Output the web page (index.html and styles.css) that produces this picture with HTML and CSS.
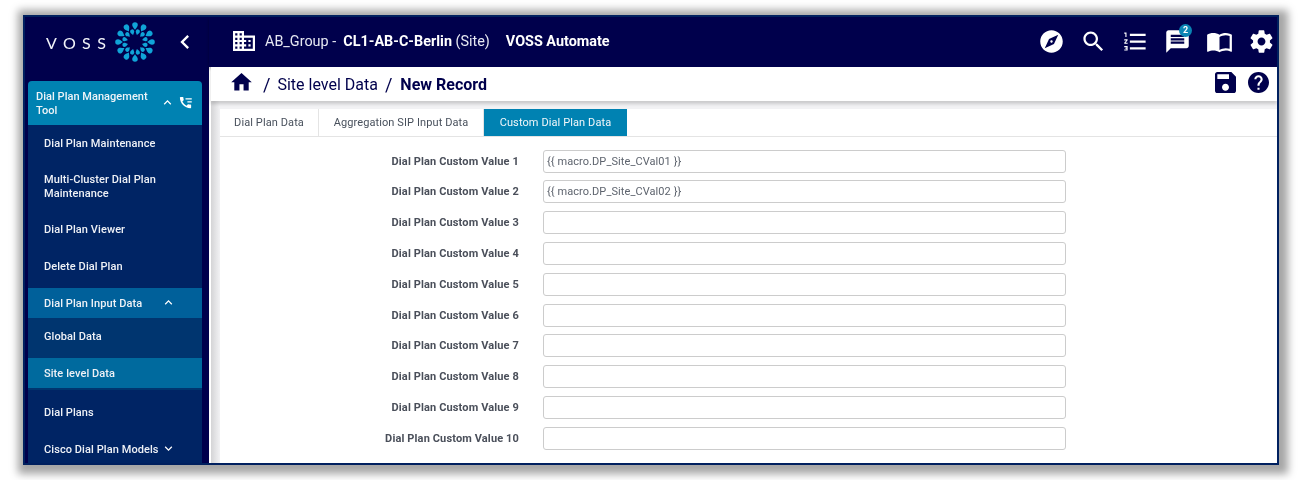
FILE: index.html
```html
<!DOCTYPE html>
<html lang="en">
<head>
<meta charset="utf-8">
<title>VOSS Automate</title>
<link rel="stylesheet" href="styles.css">
</head>
<body>
<svg class="defs" width="0" height="0" aria-hidden="true">
  <defs>
    <path id="drop" d="M0 3.6C1.4 1.6 2.8.3 2.8-1.2A2.8 2.8 0 0 0-2.8-1.2C-2.8.3-1.4 1.6 0 3.6Z"/>
  </defs>
</svg>
<div class="frame">
  <aside class="sidebar">
    <div class="brand">
      <span class="wordmark">VOSS</span>
      <svg class="logo" viewBox="-20 -20 40 40" aria-hidden="true">
        <g class="petals">
          <use href="#drop" transform="rotate(0) translate(0 -15.8)"/><use href="#drop" transform="rotate(30) translate(0 -15.8)"/><use href="#drop" transform="rotate(60) translate(0 -15.8)"/><use href="#drop" transform="rotate(90) translate(0 -15.8)"/><use href="#drop" transform="rotate(120) translate(0 -15.8)"/><use href="#drop" transform="rotate(150) translate(0 -15.8)"/><use href="#drop" transform="rotate(180) translate(0 -15.8)"/><use href="#drop" transform="rotate(210) translate(0 -15.8)"/><use href="#drop" transform="rotate(240) translate(0 -15.8)"/><use href="#drop" transform="rotate(270) translate(0 -15.8)"/><use href="#drop" transform="rotate(300) translate(0 -15.8)"/><use href="#drop" transform="rotate(330) translate(0 -15.8)"/>
          <use href="#drop" transform="rotate(15) translate(0 -10) scale(.75)"/><use href="#drop" transform="rotate(45) translate(0 -10) scale(.75)"/><use href="#drop" transform="rotate(75) translate(0 -10) scale(.75)"/><use href="#drop" transform="rotate(105) translate(0 -10) scale(.75)"/><use href="#drop" transform="rotate(135) translate(0 -10) scale(.75)"/><use href="#drop" transform="rotate(165) translate(0 -10) scale(.75)"/><use href="#drop" transform="rotate(195) translate(0 -10) scale(.75)"/><use href="#drop" transform="rotate(225) translate(0 -10) scale(.75)"/><use href="#drop" transform="rotate(255) translate(0 -10) scale(.75)"/><use href="#drop" transform="rotate(285) translate(0 -10) scale(.75)"/><use href="#drop" transform="rotate(315) translate(0 -10) scale(.75)"/><use href="#drop" transform="rotate(345) translate(0 -10) scale(.75)"/>
        </g>
      </svg>
      <svg class="collapse" viewBox="0 0 24 24" aria-hidden="true"><path d="M15.41 7.41L14 6l-6 6 6 6 1.41-1.41L10.83 12z"/></svg>
    </div>
    <nav class="menu">
      <div class="menu-head">
        <span class="menu-head-text">Dial Plan Management Tool</span>
        <svg class="chev" viewBox="0 0 24 24" aria-hidden="true"><path d="M12 8l-6 6 1.41 1.41L12 10.83l4.59 4.58L18 14z"/></svg>
        <svg class="phone" viewBox="0 0 24 24" aria-hidden="true"><path d="M20.01 15.38c-1.23 0-2.42-.2-3.53-.56-.35-.12-.74-.03-1.01.24l-1.57 1.97c-2.83-1.35-5.48-3.9-6.89-6.83l1.95-1.66c.27-.28.35-.67.24-1.02-.37-1.11-.56-2.3-.56-3.53 0-.54-.45-.99-.99-.99H4.19C3.65 3 3 3.24 3 3.99 3 13.28 10.73 21 20.01 21c.71 0 .99-.63.99-1.18v-3.45c0-.54-.45-.99-.99-.99z"/><path d="M12 5h10v2H12zM15 10h7v2h-7z"/></svg>
      </div>
      <a class="item h37">Dial Plan Maintenance</a>
      <a class="item h49">Multi-Cluster Dial Plan Maintenance</a>
      <a class="item h37">Dial Plan Viewer</a>
      <a class="item tail">Delete Dial Plan</a>
      <div class="group">
        <a class="item sub">Dial Plan Input Data<svg class="chev" viewBox="0 0 24 24" aria-hidden="true"><path d="M12 8l-6 6 1.41 1.41L12 10.83l4.59 4.58L18 14z"/></svg></a>
        <a class="item h40">Global Data</a>
        <a class="item sub current">Site level Data</a>
      </div>
      <a class="item h44">Dial Plans</a>
      <a class="item h32">Cisco Dial Plan Models<svg class="chev small" viewBox="0 0 24 24" aria-hidden="true"><path d="M16.59 8.59L12 13.17 7.41 8.59 6 10l6 6 6-6z"/></svg></a>
    </nav>
  </aside>
  <main class="main">
    <header class="topbar">
      <svg class="building" viewBox="2 3 20 18" aria-hidden="true"><path d="M12 7V3H2v18h20V7H12zM6 19H4v-2h2v2zm0-4H4v-2h2v2zm0-4H4V9h2v2zm0-4H4V5h2v2zm4 12H8v-2h2v2zm0-4H8v-2h2v2zm0-4H8V9h2v2zm0-4H8V5h2v2zm10 12h-8v-2h2v-2h-2v-2h2v-2h-2V9h8v10zm-2-8h-2v2h2v-2zm0 4h-2v2h2v-2z"/></svg>
      <span class="context">AB_Group -&nbsp; <b>CL1-AB-C-Berlin</b> (Site)</span>
      <strong class="product">VOSS Automate</strong>
      <div class="tools">
        <svg class="tool" viewBox="0 0 24 24" aria-hidden="true"><path d="M12 10.9c-.61 0-1.1.49-1.1 1.1s.49 1.1 1.1 1.1c.61 0 1.1-.49 1.1-1.1s-.49-1.1-1.1-1.1zM12 2C6.48 2 2 6.48 2 12s4.48 10 10 10 10-4.48 10-10S17.52 2 12 2zm2.19 12.19L6 18l3.81-8.19L18 6l-3.81 8.19z"/></svg>
        <svg class="tool" viewBox="0 0 24 24" aria-hidden="true"><path d="M15.5 14h-.79l-.28-.27C15.41 12.59 16 11.11 16 9.5 16 5.91 13.09 3 9.5 3S3 5.91 3 9.5 5.91 16 9.5 16c1.61 0 3.09-.59 4.23-1.57l.27.28v.79l5 4.99L20.49 19l-4.99-5zm-6 0C7.01 14 5 11.99 5 9.5S7.01 5 9.5 5 14 7.01 14 9.5 11.99 14 9.5 14z"/></svg>
        <svg class="tool" viewBox="0 0 24 24" aria-hidden="true"><path d="M2 17h2v.5H3v1h1v.5H2v1h3v-4H2v1zm1-9h1V4H2v1h1v3zm-1 3h1.8L2 13.1v.9h3v-1H3.2L5 10.9V10H2v1zm5-6v2h14V5H7zm0 14h14v-2H7v2zm0-6h14v-2H7v2z"/></svg>
        <span class="chat">
          <svg class="tool" viewBox="0 0 24 24" aria-hidden="true"><path d="M20 2H4c-1.1 0-1.99.9-1.99 2L2 22l4-4h14c1.1 0 2-.9 2-2V4c0-1.1-.9-2-2-2zm-2 12H6v-2h12v2zm0-3H6V9h12v2zm0-3H6V6h12v2z"/></svg>
          <span class="badge">2</span>
        </span>
        <svg class="tool" viewBox="0 0 24 24" aria-hidden="true"><path d="M21 5c-1.11-.35-2.33-.5-3.5-.5-1.95 0-4.05.4-5.5 1.5-1.45-1.1-3.55-1.5-5.5-1.5S2.45 4.9 1 6v14.65c0 .25.25.5.5.5.1 0 .15-.05.25-.05C3.1 20.45 5.05 20 6.5 20c1.95 0 4.05.4 5.5 1.5 1.35-.85 3.8-1.5 5.5-1.5 1.65 0 3.35.3 4.75 1.05.1.05.15.05.25.05.25 0 .5-.25.5-.5V6c-.6-.45-1.25-.75-2-1zm0 13.5c-1.1-.35-2.3-.5-3.5-.5-1.7 0-4.15.65-5.5 1.5V8c1.35-.85 3.8-1.5 5.5-1.5 1.2 0 2.4.15 3.5.5v11.5z"/></svg>
        <svg class="tool" viewBox="0 0 24 24" aria-hidden="true"><path d="M19.43 12.98c.04-.32.07-.64.07-.98s-.03-.66-.07-.98l2.11-1.65c.19-.15.24-.42.12-.64l-2-3.46c-.12-.22-.39-.3-.61-.22l-2.49 1c-.52-.4-1.08-.73-1.69-.98l-.38-2.65C14.46 2.18 14.25 2 14 2h-4c-.25 0-.46.18-.49.42l-.38 2.65c-.61.25-1.17.59-1.69.98l-2.49-1c-.23-.09-.49 0-.61.22l-2 3.46c-.13.22-.07.49.12.64l2.11 1.65c-.04.32-.07.65-.07.98s.03.66.07.98l-2.11 1.65c-.19.15-.24.42-.12.64l2 3.46c.12.22.39.3.61.22l2.49-1c.52.4 1.08.73 1.69.98l.38 2.65c.03.24.24.42.49.42h4c.25 0 .46-.18.49-.42l.38-2.65c.61-.25 1.17-.59 1.69-.98l2.49 1c.23.09.49 0 .61-.22l2-3.46c.12-.22.07-.49-.12-.64l-2.11-1.65zM12 15.5c-1.93 0-3.5-1.57-3.5-3.5s1.57-3.5 3.5-3.5 3.5 1.57 3.5 3.5-1.57 3.5-3.5 3.5z"/></svg>
      </div>
    </header>
    <div class="crumbs">
      <svg class="home" viewBox="2 3 20 17.5" aria-hidden="true"><path d="M10 20v-6h4v6h5v-8h3L12 3 2 12h3v8z"/></svg>
      <span class="sep">/</span>
      <span class="crumb">Site level Data</span>
      <span class="sep">/</span>
      <strong class="crumb-now">New Record</strong>
      <div class="actions">
        <svg class="action" viewBox="3 3 18 18" aria-hidden="true"><path d="M17 3H5c-1.11 0-2 .9-2 2v14c0 1.1.89 2 2 2h14c1.1 0 2-.9 2-2V7l-4-4zm-5 16c-1.66 0-3-1.34-3-3s1.34-3 3-3 3 1.34 3 3-1.34 3-3 3zm3-10H5V5h10v4z"/></svg>
        <svg class="action" viewBox="2 2 20 20" aria-hidden="true"><path d="M12 2C6.48 2 2 6.48 2 12s4.48 10 10 10 10-4.48 10-10S17.52 2 12 2zm1 17h-2v-2h2v2zm2.07-7.75l-.9.92C13.45 12.9 13 13.5 13 15h-2v-.5c0-1.1.45-2.1 1.17-2.83l1.24-1.26c.37-.36.59-.86.59-1.41 0-1.1-.9-2-2-2s-2 .9-2 2H8c0-2.21 1.79-4 4-4s4 1.79 4 4c0 .88-.36 1.68-.93 2.25z"/></svg>
      </div>
    </div>
    <section class="panel">
      <div class="tabs">
        <span class="tab t1">Dial Plan Data</span>
        <span class="tab t2">Aggregation SIP Input Data</span>
        <span class="tab t3 active">Custom Dial Plan Data</span>
      </div>
      <form class="form">
        <label class="row"><span class="label">Dial Plan Custom Value 1</span><input class="field" value="{{ macro.DP_Site_CVal01 }}"></label>
        <label class="row"><span class="label">Dial Plan Custom Value 2</span><input class="field" value="{{ macro.DP_Site_CVal02 }}"></label>
        <label class="row"><span class="label">Dial Plan Custom Value 3</span><input class="field"></label>
        <label class="row"><span class="label">Dial Plan Custom Value 4</span><input class="field"></label>
        <label class="row"><span class="label">Dial Plan Custom Value 5</span><input class="field"></label>
        <label class="row"><span class="label">Dial Plan Custom Value 6</span><input class="field"></label>
        <label class="row"><span class="label">Dial Plan Custom Value 7</span><input class="field"></label>
        <label class="row"><span class="label">Dial Plan Custom Value 8</span><input class="field"></label>
        <label class="row"><span class="label">Dial Plan Custom Value 9</span><input class="field"></label>
        <label class="row"><span class="label">Dial Plan Custom Value 10</span><input class="field"></label>
      </form>
    </section>
  </main>
</div>
</body>
</html>
```
FILE: styles.css
```css
* { box-sizing: border-box; }
html, body { margin: 0; height: 480px; overflow: hidden; background: #fff; }
body { font-family: Roboto, "Liberation Sans", sans-serif; padding: 15px 0 0 23px; }
.defs { position: absolute; }

.frame {
  display: flex;
  width: 1256px;
  height: 450px;
  border: 2px solid #00205f;
  background: #fff;
  overflow: hidden;
  box-shadow: 2px 2px 8px 7px #a6a6a6;
  filter: blur(.35px);
}

/* sidebar */
.sidebar { width: 184px; flex: none; background: #00004c; padding-left: 3px; }
.brand { height: 64px; display: flex; align-items: center; padding: 0 0 14px 18px; }
.wordmark { font-family: Lato, Roboto, sans-serif; font-weight: 400; font-size: 16px; letter-spacing: 6.4px; color: #f2f4fa; width: 69px; }
.logo { width: 40px; height: 40px; flex: none; }
.petals { fill: #10a4d8; }
.collapse { width: 28px; height: 28px; fill: #fff; margin-left: 16px; flex: none; }

.menu { width: 174px; }
.menu-head { height: 44px; background: #0082b2; border-radius: 4px 4px 0 0; display: flex; align-items: center; padding: 2px 6px 0 8px; color: #eef4f8; font-size: 11px; font-weight: 500; line-height: 14px; letter-spacing: .03px; }
.menu-head-text { width: 124px; }
.menu-head .chev { margin-top: -3px; }
.chev { width: 15px; height: 15px; fill: #fff; flex: none; }
.phone { width: 15px; height: 15px; fill: #fff; margin: -3px 0 0 3px; flex: none; }

.item { display: flex; align-items: center; background: #002464; color: #eef1f6; font-size: 11px; font-weight: 500; line-height: 14px; letter-spacing: .08px; padding: 0 28px 0 16px; }
.h37 { height: 37px; }
.h49 { height: 49px; }
.h40 { height: 40px; background: #00356f; padding-bottom: 3px; }
.h44 { height: 44px; padding-top: 2px; }
.h32 { height: 32px; padding-right: 0; }
.tail { height: 40px; padding-bottom: 2px; }
.group { background: #00356f; padding-bottom: 2px; }
.sub { height: 30px; background: #00609a; padding: 1px 26px 0 16px; justify-content: space-between; }
.sub .chev { margin-top: -2px; }
.current { background: #006a9e; }
.small { width: 15px; height: 15px; margin: -3px 0 0 2px; }

/* main */
.main { flex: 1; min-width: 0; display: flex; flex-direction: column; border-left: 2px solid #fff; background: linear-gradient(to right, #d4d4d6, #f2f2f4 9px); }
.topbar { height: 50px; flex: none; background: #00004c; color: #e6e8f2; display: flex; align-items: center; padding: 0 2px 2px 24px; margin-left: -2px; box-shadow: 0 2px 3px rgba(0,0,0,.3); position: relative; }
.building { width: 22px; height: 20px; fill: #fff; flex: none; margin-right: 10px; }
.context { font-size: 14.4px; }
.context b { font-weight: 700; color: #fff; }
.product { font-size: 14.4px; font-weight: 700; color: #fff; margin-left: 16px; }
.tools { margin-left: auto; display: flex; align-items: center; gap: 15px; }
.tool { width: 27px; height: 27px; fill: #fff; display: block; }
.chat { position: relative; display: block; }
.badge { position: absolute; top: -4px; right: -1px; width: 13px; height: 13px; border-radius: 50%; background: #0a84b4; color: #fff; font-size: 9px; font-weight: 700; line-height: 13px; text-align: center; }

.crumbs { height: 34px; flex: none; background: #fff; display: flex; align-items: center; padding: 0 8px 0 20px; color: #00004c; box-shadow: 0 3px 3px rgba(0,0,0,.16); position: relative; }
.home { width: 21px; height: 18px; fill: #00004c; margin-top: -5px; flex: none; }
.sep { font-size: 18px; margin: 0 7px 0 11px; }
.crumb { font-size: 16px; }
.crumb + .sep { margin-left: 7px; }
.crumb-now { font-size: 16px; font-weight: 700; margin-left: 1px; }
.actions { margin-left: auto; display: flex; align-items: center; gap: 12px; margin-top: -3px; }
.action { width: 21px; height: 21px; fill: #00004c; display: block; }

.panel { flex: 1; margin: 8px 0 0 9px; background: #fff; min-height: 0; }
.tabs { display: flex; height: 28px; border-bottom: 1px solid #e4e4e4; }
.tab { display: flex; align-items: center; justify-content: center; font-size: 11px; color: #48505c; border-right: 1px solid #e4e4e4; letter-spacing: .1px; }
.t1 { width: 99px; }
.t2 { width: 165px; }
.t3 { width: 143px; }
.active { background: #0082b2; color: #f2f7fa; border-right: 0; }

.form { display: flex; flex-direction: column; gap: 7.8px; padding-top: 12.6px; }
.row { display: flex; align-items: center; height: 23px; }
.label { width: 299px; text-align: right; font-size: 11px; font-weight: 700; color: #4a4f5a; flex: none; letter-spacing: .13px; }
.field { width: 523px; height: 23px; margin-left: 24px; border: 1px solid #cccccc; border-radius: 3px; padding: 0 3px; font: 400 11px Roboto, sans-serif; letter-spacing: .08px; color: #5e646e; background: #fff; }
```
